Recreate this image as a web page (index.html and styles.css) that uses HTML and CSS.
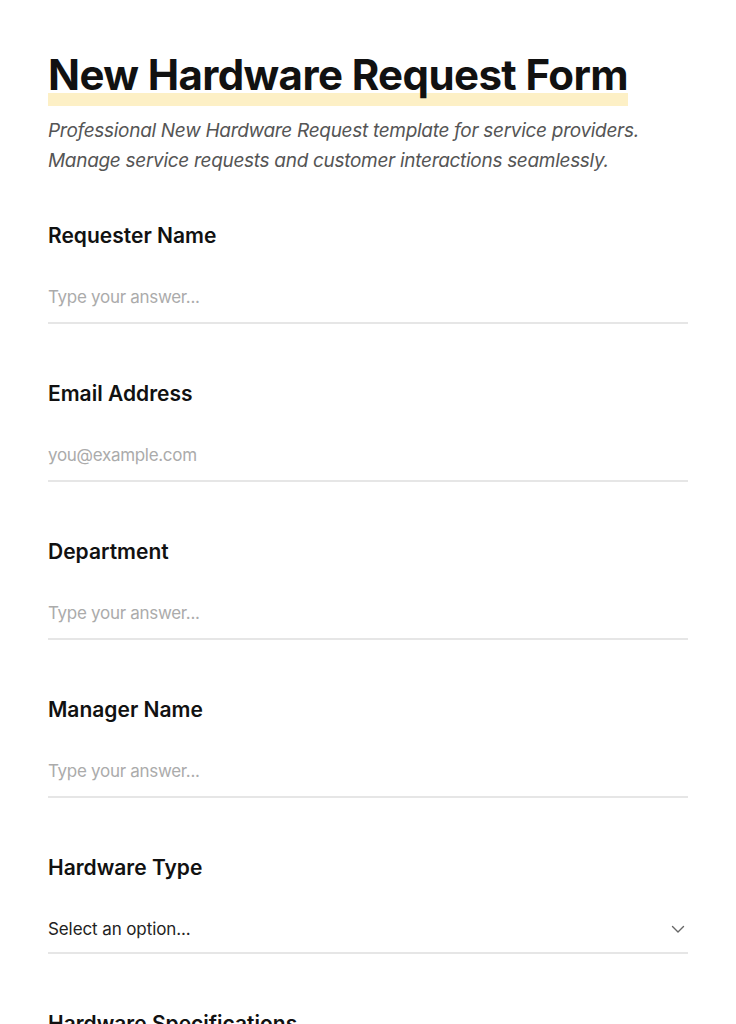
FILE: index.html
```html
<!DOCTYPE html>
<html lang="en">
<head>
<meta charset="utf-8">
<title>New Hardware Request Form</title>
<link rel="stylesheet" href="styles.css">
</head>
<body>
<main class="page">
  <header class="intro">
    <h1 class="title"><span class="title-mark">New Hardware Request Form</span></h1>
    <p class="subtitle">Professional New Hardware Request template for service providers. Manage service requests and customer interactions seamlessly.</p>
  </header>
  <form class="form">
    <div class="field">
      <label class="label" for="f1">Requester Name</label>
      <input class="input" id="f1" type="text" placeholder="Type your answer...">
    </div>
    <div class="field">
      <label class="label" for="f2">Email Address</label>
      <input class="input" id="f2" type="email" placeholder="you@example.com">
    </div>
    <div class="field">
      <label class="label" for="f3">Department</label>
      <input class="input" id="f3" type="text" placeholder="Type your answer...">
    </div>
    <div class="field">
      <label class="label" for="f4">Manager Name</label>
      <input class="input" id="f4" type="text" placeholder="Type your answer...">
    </div>
    <div class="field">
      <label class="label" for="f5">Hardware Type</label>
      <div class="select">
        <span class="select-text">Select an option...</span>
        <svg class="chevron" width="14" height="14" viewBox="0 0 14 14" aria-hidden="true"><path d="M1.5 4.5 L7 10 L12.5 4.5" fill="none" stroke="#666" stroke-width="1.4" stroke-linecap="round" stroke-linejoin="round"/></svg>
      </div>
    </div>
    <div class="field">
      <label class="label" for="f6">Hardware Specifications</label>
      <input class="input" id="f6" type="text" placeholder="Type your answer...">
    </div>
  </form>
</main>
</body>
</html>
```
FILE: styles.css
```css
* { box-sizing: border-box; }
html, body { margin: 0; padding: 0; background: #fff; }
body { font-family: Inter, "Noto Sans", sans-serif; color: #111; }
.page { padding: 50px 48px 0 48px; width: 736px; }
.intro { margin-bottom: 46px; }
.title { display: flex; margin: 0; font-size: 42px; line-height: 50px; font-weight: 700; letter-spacing: -0.6px; color: #111; }
.title-mark { display: block; padding-bottom: 6px; background: linear-gradient(to bottom, transparent 77%, #fdf0c6 77%); }
.subtitle { margin: 10px 0 0 0; font-size: 19px; line-height: 30px; font-style: italic; color: #555; letter-spacing: -0.3px; max-width: 600px; }
.form { display: flex; flex-direction: column; gap: 56px; width: 640px; }
.field { display: flex; flex-direction: column; }
.label { font-size: 21px; line-height: 28px; font-weight: 600; letter-spacing: 0; color: #111; margin-bottom: 34px; }
.input { font-family: inherit; font-size: 17px; line-height: 26px; height: 40px; padding: 0 0 12px 0; border: 0; border-bottom: 2px solid #e6e6e6; outline: none; background: transparent; color: #222; letter-spacing: -0.3px; }
.input::placeholder { color: #ababab; }
.select { display: flex; align-items: center; justify-content: space-between; height: 38px; border-bottom: 2px solid #e6e6e6; padding: 0 3px 10px 0; font-size: 17px; line-height: 26px; color: #222; letter-spacing: -0.1px; }
.chevron { display: block; }
```
